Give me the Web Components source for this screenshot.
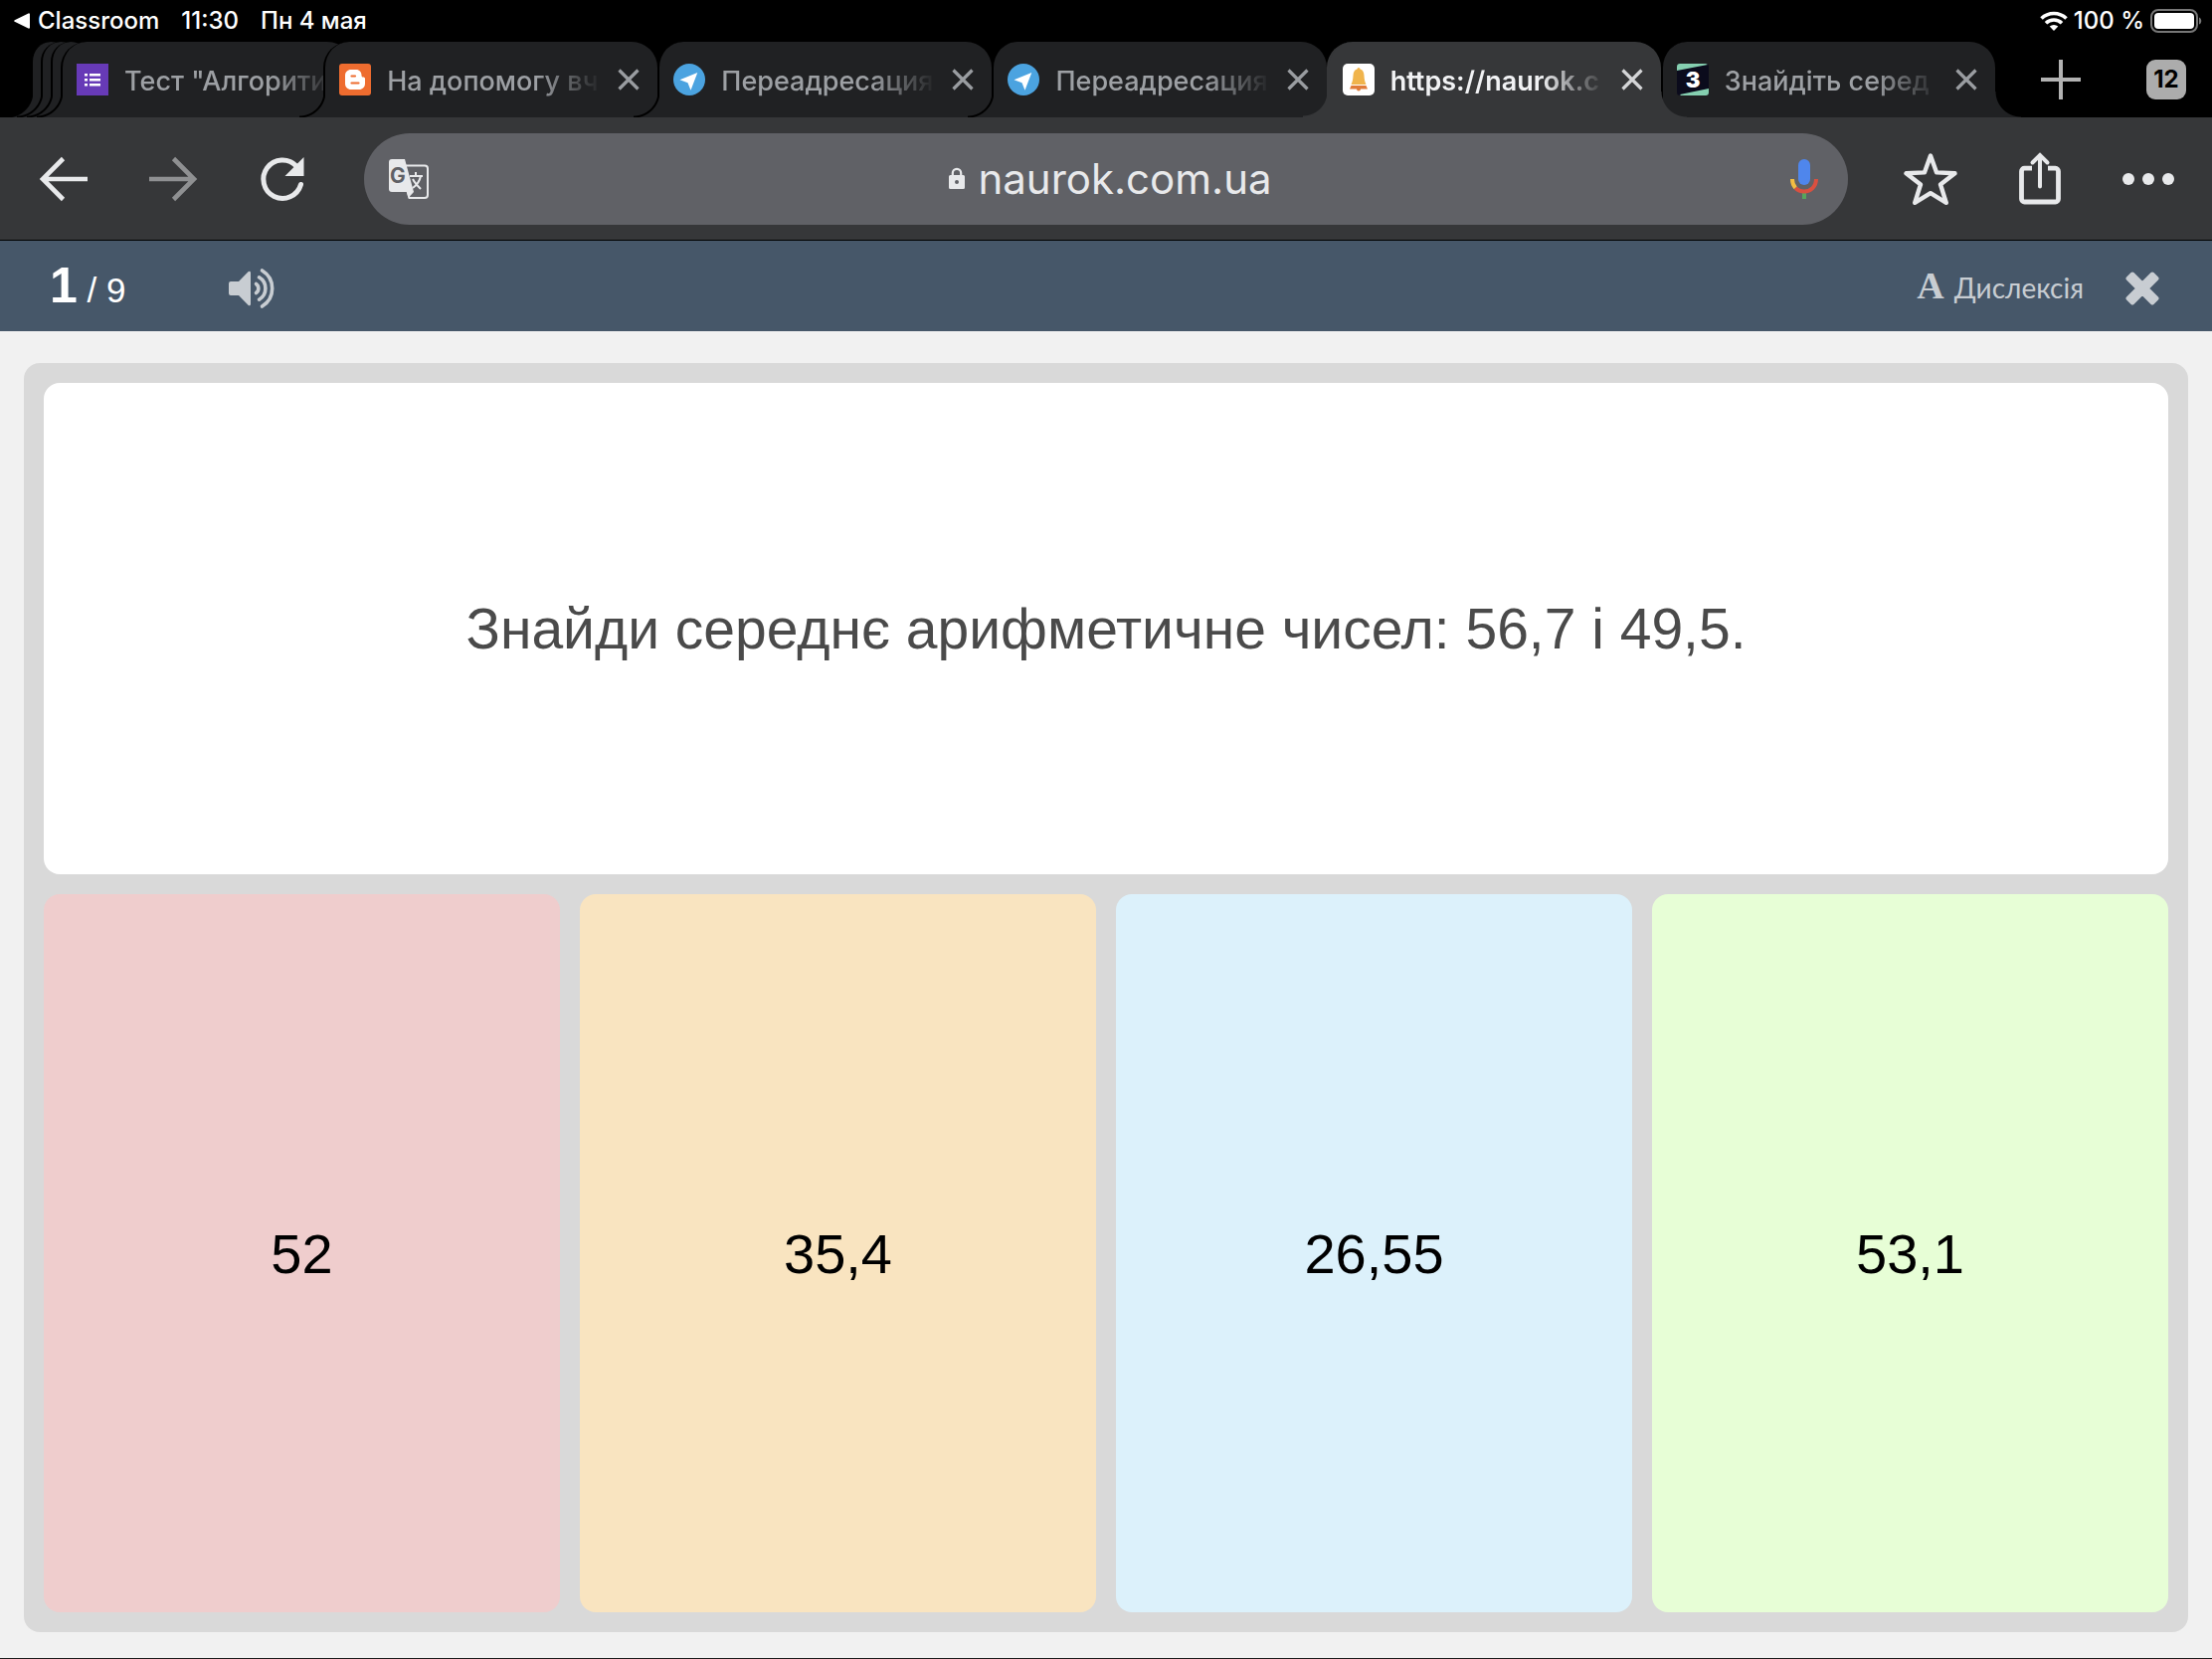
<!DOCTYPE html>
<html lang="uk">
<head>
<meta charset="utf-8">
<meta name="viewport" content="width=device-width, initial-scale=1">
<title>naurok.com.ua</title>
<style>
    :root {
        --font_ui: Inter, "Noto Sans", sans-serif;
        --font_page: "Liberation Sans", Arial, sans-serif;
        --font_serif: "Liberation Serif", serif;
        --toolbar: #363739;
        --tab: #202123;
        --icon: #e8e9eb;
    }

    body {
        margin: 0;
        min-height: 100vh;
        display: flex;
        flex-direction: column;
        background: #f1f1f1;
        font-family: var(--font_ui);
    }

    svg {
        display: block;
    }

    quiz-board {
        flex: 1;
    }
</style>
</head>
<body>

<status-bar data-app="Classroom" data-time="11:30" data-date="Пн 4 мая" data-battery="100 %"></status-bar>

<tab-strip data-count="12">
    <browser-tab stacked></browser-tab>
    <browser-tab stacked></browser-tab>
    <browser-tab stacked></browser-tab>
    <browser-tab stacked data-title='Тест "Алгорити'>
        <svg slot="icon" width="32" height="32" viewBox="0 0 32 32">
            <path fill="#673ab7" d="M0 0h32v32H0z"/>
            <path fill="#fff" d="M13 10h11v2.500H13zM13 15h11v2.500H13zM13 20h11v2.500H13zM8 10h3v2.500H8zM8 15h3v2.500H8zM8 20h3v2.500H8z"/>
        </svg>
    </browser-tab>
    <browser-tab data-title="На допомогу вч">
        <svg slot="icon" width="32" height="32" viewBox="0 0 32 32">
            <rect width="32" height="32" rx="3" fill="#ee6c2f"/>
            <path fill="#fff" d="M12 6h5c3.500 0 5.500 2.500 5.500 5.500 0 1.500.5 2 1.500 2s2 .5 2 1.500V20c0 3.500-2.500 6-6 6h-8c-3.500 0-6-2.500-6-6v-8c0-3.500 2.500-6 6-6z"/>
            <path stroke="#ee6c2f" stroke-width="2.200" stroke-linecap="round" d="M12.500 12.500h3.500M12.500 19.500h7"/>
        </svg>
    </browser-tab>
    <browser-tab data-title="Переадресация">
        <svg slot="icon" width="32" height="32" viewBox="0 0 32 32">
            <circle cx="16" cy="16" r="16" fill="#4ba3e0"/>
            <path fill="#fff" d="M6.500 16.300 24.300 9 17.500 26.800l-3-7.600z"/>
        </svg>
    </browser-tab>
    <browser-tab data-title="Переадресация">
        <svg slot="icon" width="32" height="32" viewBox="0 0 32 32">
            <circle cx="16" cy="16" r="16" fill="#4ba3e0"/>
            <path fill="#fff" d="M6.500 16.300 24.300 9 17.500 26.800l-3-7.600z"/>
        </svg>
    </browser-tab>
    <browser-tab active data-title="https://naurok.c">
        <svg slot="icon" width="32" height="32" viewBox="0 0 32 32">
            <rect width="32" height="32" rx="5" fill="#fff"/>
            <path fill="#f0b44c" d="M14.500 5.500a1.500 1.500 0 0 1 3 0c2.800.8 3.800 3 4 6.500.2 4 .8 6 2 9h-15c1.200-3 1.800-5 2-9 .2-3.500 1.200-5.700 4-6.500z"/>
            <path fill="#e07b39" d="M8.500 22h15l1.500 3.500h-7a2 2 0 0 1-4 0H7z"/>
        </svg>
    </browser-tab>
    <browser-tab data-title="Знайдіть серед">
        <svg slot="icon" width="32" height="32" viewBox="0 0 32 32">
            <rect width="32" height="32" rx="3" fill="#0b0b1c"/>
            <path fill="#85cfb0" d="M3 0h26L31 1 0 7V3a3 3 0 0 1 3-3zM32 25v4a3 3 0 0 1-3 3H4l-1-1z"/>
            <text x="16" y="24" text-anchor="middle" font-family="Inter, sans-serif" font-size="22" font-weight="900" fill="#fff">3</text>
        </svg>
    </browser-tab>
</tab-strip>

<tool-bar data-host="naurok.com.ua"></tool-bar>

<quiz-header data-current="1" data-total="9"></quiz-header>

<quiz-board>
    <span slot="question">Знайди середнє арифметичне чисел: 56,7 і 49,5.</span>
    <answer-card style="--fill: #efcdcd">52</answer-card>
    <answer-card style="--fill: #f9e4c0">35,4</answer-card>
    <answer-card style="--fill: #dcf1fb">26,55</answer-card>
    <answer-card style="--fill: #e7fed6">53,1</answer-card>
</quiz-board>

<script>
// Creates a template and resets buttons, which outer rules cannot reach
function html(markup) {
    const template = document.createElement("template");
    template.innerHTML = `
<style>
    :host { box-sizing: border-box; }
    * { box-sizing: border-box; }
    svg { display: block; }
    button { margin: 0; padding: 0; border: 0; background: none; color: inherit; font: inherit; }
</style>` + markup;
    return template;
}

class BaseElement extends HTMLElement {
    constructor() {
        super();
        this.attachShadow({ mode: "open" });
        this.shadowRoot.append(this.constructor.template.content.cloneNode(true));
        // copy data-* values into the nodes that ask for them
        this.shadowRoot.querySelectorAll("[data-bind]").forEach(node => {
            node.textContent = this.dataset[node.dataset.bind] || "";
        });
    }
}


// Status bar
customElements.define("status-bar", class extends BaseElement {
    static template = html(`
<style>
    :host {
        display: flex;
        align-items: center;
        gap: 22px;
        height: 42px;
        padding: 0 14px;
        background: #000;
        color: #fff;
        font-size: 24px;
        line-height: 40px;
        font-weight: 500;
    }
    .back { display: flex; align-items: center; gap: 8px; }
    .right { display: flex; align-items: center; gap: 6px; margin: 0 -4px 0 auto; }
</style>
<button class="back">
    <svg width="16" height="16" viewBox="0 0 16 16"><path fill="#fff" d="M14.500.5A1 1 0 0 1 16 1.400v13.200a1 1 0 0 1-1.500.9L.7 8.800a1 1 0 0 1 0-1.600z"/></svg>
    <span data-bind="app"></span>
</button>
<span data-bind="time"></span>
<span data-bind="date"></span>
<div class="right">
    <svg width="28" height="20" viewBox="0 0 28 20" fill="none" stroke="#fff" stroke-width="3.600">
        <path d="M1.500 7.500a18 18 0 0 1 25 0M6 12.200a11.500 11.500 0 0 1 16 0"/>
        <path fill="#fff" stroke="none" d="M14 20l-4.300-4.400a6.300 6.300 0 0 1 8.600 0z"/>
    </svg>
    <span data-bind="battery"></span>
    <svg width="52" height="24" viewBox="0 0 52 24">
        <rect x="1" y="1" width="46" height="22" rx="7" fill="none" stroke="#777" stroke-width="2"/>
        <rect x="4" y="4" width="40" height="16" rx="4" fill="#fff"/>
        <path fill="#777" d="M49 8.500c3 1 3 6 0 7z"/>
    </svg>
</div>
`);
});


// Tab: curved feet on both sides lie over the neighbours
customElements.define("browser-tab", class extends BaseElement {
    static template = html(`
<style>
    :host {
        --fill: var(--tab);
        --line: #000;
        position: relative;
        display: flex;
        align-items: center;
        gap: 16px;
        min-width: 0;
        height: 76px;
        padding: 0 18px 0 14px;
        border-left: 2px solid var(--line);
        border-radius: 26px 26px 0 0;
        background: var(--fill);
        color: #9da0a4;
        font-size: 27px;
        line-height: 40px;
        font-weight: 500;
    }
    :host([active]) {
        --fill: var(--toolbar);
        --line: var(--toolbar);
        z-index: 1;
        color: #f1f2f4;
        font-weight: 600;
    }
    :host([stacked]) { margin-right: -30px; }
    :host([stacked]) .close { display: none; }
    :host::before, :host::after {
        content: "";
        position: absolute;
        bottom: 0;
        width: 26px;
        height: 26px;
    }
    :host::before {
        right: 100%;
        background: radial-gradient(circle at 0 0, transparent 24px, var(--line) 25px 26px, var(--fill) 27px);
    }
    :host::after {
        left: 100%;
        background: radial-gradient(circle at 100% 0, transparent 25px, var(--fill) 26px);
    }
    .title {
        flex: 1;
        min-width: 0;
        padding-top: 4px;
        overflow: hidden;
        white-space: nowrap;
        text-align: left;
        mask-image: linear-gradient(to right, #000 70%, transparent);
    }
    .close { color: #9a9da1; }
    :host([active]) .close { color: #d4d5d7; }
</style>
<slot name="icon"></slot>
<button class="title" data-bind="title"></button>
<button class="close" aria-label="Закрити">
    <svg width="22" height="22" viewBox="0 0 22 22" stroke="currentColor" stroke-width="3.200"><path d="M1.500 1.500l19 19M20.500 1.500l-19 19"/></svg>
</button>
`);
});


// Tab strip
customElements.define("tab-strip", class extends BaseElement {
    static template = html(`
<style>
    :host {
        display: flex;
        background: #000;
    }
    .tabs {
        flex: 1;
        display: grid;
        grid-template-columns: 10px 10px 10px 264fr repeat(5, 336fr);
        padding-left: 31px;
    }
    .tools {
        display: flex;
        align-items: center;
        justify-content: space-between;
        width: 218px;
        height: 76px;
        padding: 0 26px 0 46px;
        color: #b2b2b2;
    }
    .count {
        width: 40px;
        height: 40px;
        border-radius: 9px;
        background: #acacac;
        color: #000;
        font-size: 24px;
        line-height: 40px;
        font-weight: 700;
    }
</style>
<div class="tabs"><slot></slot></div>
<div class="tools">
    <button aria-label="Нова вкладка">
        <svg width="40" height="40" viewBox="0 0 40 40" stroke="currentColor" stroke-width="4"><path d="M20 0v40M0 20h40"/></svg>
    </button>
    <button class="count" data-bind="count"></button>
</div>
`);
});


// Toolbar
customElements.define("tool-bar", class extends BaseElement {
    static template = html(`
<style>
    :host {
        display: flex;
        align-items: center;
        height: 124px;
        padding: 0 38px;
        border-bottom: 1px solid #000;
        background: var(--toolbar);
        color: var(--icon);
    }
    nav { display: flex; gap: 58px; }
    .off { opacity: .5; }
    .omnibox {
        flex: 1;
        display: flex;
        align-items: center;
        justify-content: space-between;
        height: 92px;
        margin: 0 56px;
        padding: 0 30px 0 24px;
        border-radius: 46px;
        background: #606166;
    }
    .address { display: flex; align-items: center; gap: 12px; }
    input {
        field-sizing: content;
        padding: 0;
        border: 0;
        outline: 0;
        background: none;
        color: inherit;
        font-family: inherit;
        font-size: 42px;
        line-height: 56px;
    }
    .actions { gap: 60px; }
</style>
<nav>
    <button aria-label="Назад">
        <svg width="52" height="52" viewBox="0 0 52 52" fill="none" stroke="currentColor" stroke-width="4.600"><path d="M50 26H6M25.500 5.500 5 26l20.500 20.500"/></svg>
    </button>
    <button class="off" aria-label="Вперед">
        <svg width="52" height="52" viewBox="0 0 52 52" fill="none" stroke="currentColor" stroke-width="4.600"><path d="M2 26h44M26.500 5.500 47 26 26.500 46.500"/></svg>
    </button>
    <button aria-label="Оновити">
        <svg width="52" height="52" viewBox="-3 0 52 52">
            <path fill="none" stroke="currentColor" stroke-width="5" stroke-linecap="round" d="M41.500 31.500A19.200 19.200 0 1 1 37 13"/>
            <path fill="currentColor" d="M44.500 4v19H25.500z"/>
        </svg>
    </button>
</nav>
<div class="omnibox">
    <button aria-label="Перекласти">
        <svg width="42" height="42" viewBox="0 0 42 42">
            <path fill="none" stroke="currentColor" stroke-width="2" d="M18 7.500h19a3 3 0 0 1 3 3V37a3 3 0 0 1-3 3H21.500L18 28"/>
            <path fill="currentColor" d="M4 1h13l9 33h-5L4 34a3 3 0 0 1-3-3V4a3 3 0 0 1 3-3z"/>
            <path fill="currentColor" d="M19 34h7l-5.500 6z"/>
            <text x="2" y="25" font-family="Inter, sans-serif" font-size="21" font-weight="700" fill="#606166">G</text>
            <path fill="none" stroke="currentColor" stroke-width="2" d="M22 18h13M28 14v4M33 18c-1 5-4 9-8 12M25 21c2 4 5 7 8 10"/>
        </svg>
    </button>
    <div class="address">
        <label for="url" aria-label="Адреса">
            <svg width="18" height="24" viewBox="0 0 18 24">
                <path fill="none" stroke="currentColor" stroke-width="2.200" d="M4.800 9V6a4.200 4.200 0 0 1 8.400 0v3"/>
                <path fill="currentColor" fill-rule="evenodd" d="M2.500 8h13A1.500 1.500 0 0 1 17 9.500v11a1.500 1.500 0 0 1-1.500 1.500h-13A1.500 1.500 0 0 1 1 20.500v-11A1.500 1.500 0 0 1 2.500 8zM9 13a2 2 0 1 0 0 4 2 2 0 0 0 0-4z"/>
            </svg>
        </label>
        <input id="url" type="text">
    </div>
    <button aria-label="Голосовий пошук">
        <svg width="28" height="42" viewBox="0 0 28 42" fill="none">
            <rect x="8" y="1" width="12" height="26" rx="6" fill="#4f86ec"/>
            <path stroke="#57a55c" stroke-width="4" d="M14 34v7"/>
            <path stroke="#d95040" stroke-width="4" d="M26 21c0 7.500-5.500 12.500-12 12.500-3.500 0-6.500-1.200-8.700-3.500"/>
            <path stroke="#f2bd42" stroke-width="4" d="M2 21c0 3.600 1.200 6.600 3.200 8.800"/>
        </svg>
    </button>
</div>
<nav class="actions">
    <button aria-label="Закладка">
        <svg width="54" height="54" viewBox="0 0 54 54" fill="none" stroke="currentColor" stroke-width="4.400" stroke-linejoin="round"><path d="M27 3.500l6.100 16.900 18.400.9L37 32.500l5.800 18.300L27 41.200l-15.800 9.600L17 32.500 2.500 21.300l18.400-.9z"/></svg>
    </button>
    <button aria-label="Поділитися">
        <svg width="46" height="54" viewBox="0 0 46 54" fill="none" stroke="currentColor" stroke-width="4.800">
            <path d="M15 16.200H7.500a3 3 0 0 0-3 3V47a3 3 0 0 0 3 3h31a3 3 0 0 0 3-3V19.200a3 3 0 0 0-3-3H31"/>
            <path stroke-width="4" stroke-linecap="round" d="M23 34.500V3M15.500 10.500 23 3l7.500 7.500"/>
        </svg>
    </button>
    <button aria-label="Меню">
        <svg width="52" height="54" viewBox="0 0 52 54" fill="currentColor"><circle cx="6" cy="27" r="6"/><circle cx="26" cy="27" r="6"/><circle cx="46" cy="27" r="6"/></svg>
    </button>
</nav>
`);

    constructor() {
        super();
        this.shadowRoot.querySelector("input").value = this.dataset["host"];
    }
});


// Test header
customElements.define("quiz-header", class extends BaseElement {
    static template = html(`
<style>
    :host {
        display: flex;
        align-items: center;
        height: 91px;
        padding: 4px 53px 0 50px;
        background: #465769;
        color: #fff;
        font-family: var(--font_page);
    }
    .progress {
        width: 179px;
        font-size: 35px;
        line-height: 56px;
        white-space: nowrap;
    }
    b { font-size: 50px; }
    button { color: #c8cdd2; }
    .dyslexia {
        display: flex;
        align-items: baseline;
        gap: 10px;
        margin: 0 42px 4px auto;
        font-family: Lato, var(--font_ui);
        font-size: 28px;
        line-height: 40px;
    }
    .letter { font-family: var(--font_serif); font-size: 38px; font-weight: bold; }
</style>
<div class="progress"><b data-bind="current"></b> / <span data-bind="total"></span></div>
<button aria-label="Озвучити">
    <svg width="48" height="42" viewBox="0 0 48 42" fill="none" stroke="currentColor" stroke-width="3.600" stroke-linecap="round">
        <path fill="currentColor" stroke="none" d="M3 14h8L20.500 4.300c1-1 2.500-.5 2.500 1v31.400c0 1.500-1.500 2-2.500 1L11 28H3a2 2 0 0 1-2-2V16a2 2 0 0 1 2-2z"/>
        <path d="M28.500 16.500a5.500 5.500 0 0 1 0 9M31.500 9.800a13 13 0 0 1 0 22.400M34.500 3a21 21 0 0 1 0 36"/>
    </svg>
</button>
<button class="dyslexia"><span class="letter">A</span><span>Дислексія</span></button>
<button aria-label="Закрити">
    <svg width="34" height="34" viewBox="0 0 34 34" stroke="currentColor" fill="currentColor" stroke-width="4" stroke-linejoin="round">
        <path d="M7 2.500 17 12.500 27 2.500 31.500 7 21.500 17l10 10-4.500 4.500-10-10-10 10L2.500 27l10-10L2.500 7z"/>
    </svg>
</button>
`);
});


// Question and the grid of answers
customElements.define("quiz-board", class extends BaseElement {
    static template = html(`
<style>
    :host {
        display: flex;
        padding: 32px 24px 26px;
        border-bottom: 1px solid #1c1c1c;
        font-family: var(--font_page);
        font-size: 56px;
        line-height: 64px;
    }
    main {
        flex: 1;
        display: grid;
        grid-template-rows: 494fr 722fr;
        gap: 20px;
        padding: 20px;
        border-radius: 16px;
        background: #d9d9d9;
    }
    .question {
        display: grid;
        place-items: center;
        padding: 20px;
        border-radius: 16px;
        background: #fff;
        color: #4a4a4a;
        font-size: 57px;
        text-align: center;
    }
    .answers {
        display: grid;
        grid-template-columns: repeat(4, 1fr);
        gap: 20px;
    }
</style>
<main>
    <div class="question"><slot name="question"></slot></div>
    <div class="answers"><slot></slot></div>
</main>
`);
});


customElements.define("answer-card", class extends BaseElement {
    static template = html(`
<style>
    :host { display: grid; }
    button {
        padding: 22px 20px 20px;
        border-radius: 16px;
        background: var(--fill);
        color: #000;
    }
</style>
<button><slot></slot></button>
`);
});
</script>
</body>
</html>
